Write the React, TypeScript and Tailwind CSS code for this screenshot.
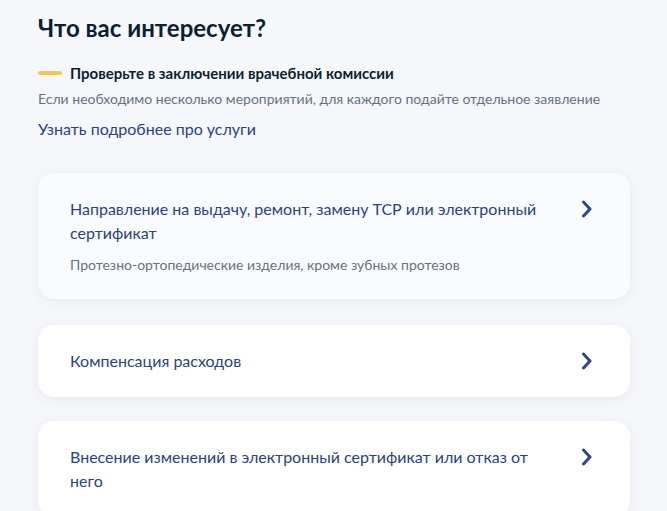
type Service = {
  title: string
  hint?: string
  active?: boolean
}

const services: Service[] = [
  {
    title: 'Направление на выдачу, ремонт, замену ТСР или электронный сертификат',
    hint: 'Протезно-ортопедические изделия, кроме зубных протезов',
    active: true,
  },
  { title: 'Компенсация расходов' },
  { title: 'Внесение изменений в электронный сертификат или отказ от него' },
]

const Chevron = () => (
  <svg width="12" height="18" viewBox="0 0 12 18" fill="none" className="mr-[5px] mt-[3px] shrink-0">
    <path d="M2.5 2L9 9L2.5 16" stroke="#2d4597" strokeWidth="3" strokeLinecap="round" strokeLinejoin="round" />
  </svg>
)

const ServiceCard = ({ title, hint, active }: Service) => (
  <button
    type="button"
    className={`flex w-full items-start justify-between rounded-2xl px-8 py-6 text-left shadow-[0_2px_12px_rgba(40,60,110,0.07)] ${
      active ? 'mb-0.5 bg-[#f9fbfe]' : 'bg-white'
    }`}
  >
    <div className="max-w-[480px]">
      <div className="text-[16px] leading-6 text-[#2a4380]">{title}</div>
      {hint && <div className="mt-2.5 text-[14px] leading-5 text-[#66727f]">{hint}</div>}
    </div>
    <Chevron />
  </button>
)

export default function App() {
  return (
    <div
      className="min-h-[511px] w-full bg-[#f5f7fb] px-[38px] pt-3"
      style={{ fontFamily: 'Lato, "Noto Sans", sans-serif' }}
    >
      <h1 className="text-[24px] font-bold leading-8 text-[#0b1f33]">Что вас интересует?</h1>

      <div className="mt-[19px] flex items-center gap-2">
        <span className="h-[4px] w-6 rounded-full bg-[#ecc94b]" />
        <span className="text-[15px] font-bold leading-5 text-[#0b1f33]">
          Проверьте в заключении врачебной комиссии
        </span>
      </div>
      <p className="mt-1.5 text-[14px] leading-5 text-[#66727f]">
        Если необходимо несколько мероприятий, для каждого подайте отдельное заявление
      </p>
      <a href="#" className="mt-2.5 block text-[16px] leading-5 text-[#2a4380]">
        Узнать подробнее про услуги
      </a>

      <div className="mt-[34px] flex w-[592px] flex-col gap-6">
        {services.map((s) => (
          <ServiceCard key={s.title} {...s} />
        ))}
      </div>
    </div>
  )
}
